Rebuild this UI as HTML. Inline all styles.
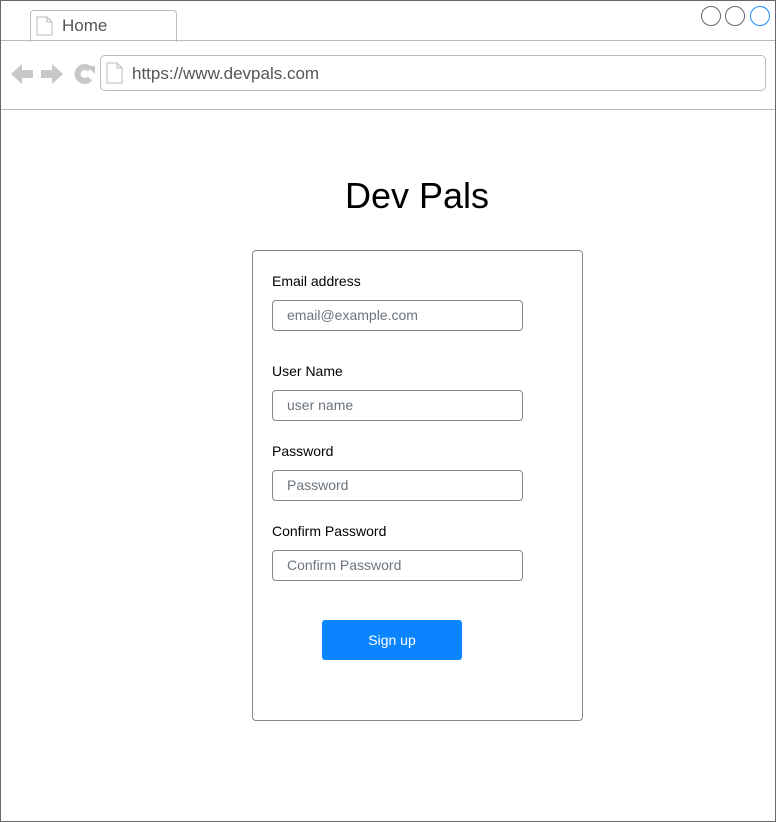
<!DOCTYPE html>
<html><head><style>
body{margin:0;width:776px;height:822px;position:relative;font-family:"Liberation Sans",Arial,sans-serif;background:#fff;overflow:hidden}
.frame{position:absolute;left:0;top:0;width:774px;height:820px;border:1px solid #666}
.abs{position:absolute}
.lbl{position:absolute;left:272px;font-size:14px;color:#000}
.inp{position:absolute;left:272px;width:251px;height:31px;border:1px solid #888;border-radius:4px;box-sizing:border-box;font-size:14px;color:#6c757d;padding-left:14px;line-height:29px}
</style></head><body>
<div class="frame"></div>
<div class="abs" style="left:30px;top:10px;width:145px;height:31px;border:1px solid #bbb;border-bottom:none;border-radius:4px 4px 0 0;background:#fff"></div>
<div class="abs" style="left:1px;top:40px;width:774px;border-top:1px solid #bbb"></div>
<div class="abs" style="left:1px;top:109px;width:774px;border-top:1px solid #bbb"></div>
<svg class="abs" style="left:36px;top:16px" width="18" height="20"><path d="M1 1h10l5 5v13H1z M11 1v5h5" fill="#fff" stroke="#bbb"/></svg>
<div class="abs" style="left:62px;top:16px;font-size:17px;color:#555">Home</div>
<svg class="abs" style="left:700px;top:5px" width="72" height="22"><circle cx="11" cy="11" r="9.5" fill="none" stroke="#666"/><circle cx="35" cy="11" r="9.5" fill="none" stroke="#666"/><circle cx="60" cy="11" r="9.5" fill="none" stroke="#1e90ff"/></svg>
<svg class="abs" style="left:10px;top:62px" width="88" height="24"><path d="M1 12l11-10v6h11v8H12v6z" fill="#c8c8c8"/><path d="M53 12L42 2v6H31v8h11v6z" fill="#c8c8c8"/><path d="M80 7.5A7 7 0 1 0 80 16.5" fill="none" stroke="#c8c8c8" stroke-width="6"/><path d="M77 4h8v8z" fill="#c8c8c8"/></svg>
<div class="abs" style="left:100px;top:55px;width:666px;height:36px;border:1px solid #bbb;border-radius:5px;box-sizing:border-box"></div>
<svg class="abs" style="left:106px;top:62px" width="18" height="22"><path d="M1 1h10l5 5v15H1z M11 1v5h5" fill="#fff" stroke="#bbb"/></svg>
<div class="abs" style="left:132px;top:64px;font-size:17px;color:#555">https://www.devpals.com</div>
<div class="abs" style="left:0;width:834px;top:175px;text-align:center;font-size:36px;color:#000">Dev Pals</div>
<div class="abs" style="left:252px;top:250px;width:331px;height:471px;border:1px solid #888;border-radius:4px;box-sizing:border-box"></div>
<div class="lbl" style="top:273px">Email address</div>
<div class="inp" style="top:300px">email@example.com</div>
<div class="lbl" style="top:363px">User Name</div>
<div class="inp" style="top:390px">user name</div>
<div class="lbl" style="top:443px">Password</div>
<div class="inp" style="top:470px">Password</div>
<div class="lbl" style="top:523px">Confirm Password</div>
<div class="inp" style="top:550px">Confirm Password</div>
<div class="abs" style="left:322px;top:620px;width:140px;height:40px;background:#0a84ff;border-radius:3px;color:#fff;font-size:14px;text-align:center;line-height:40px">Sign up</div>
</body></html>
